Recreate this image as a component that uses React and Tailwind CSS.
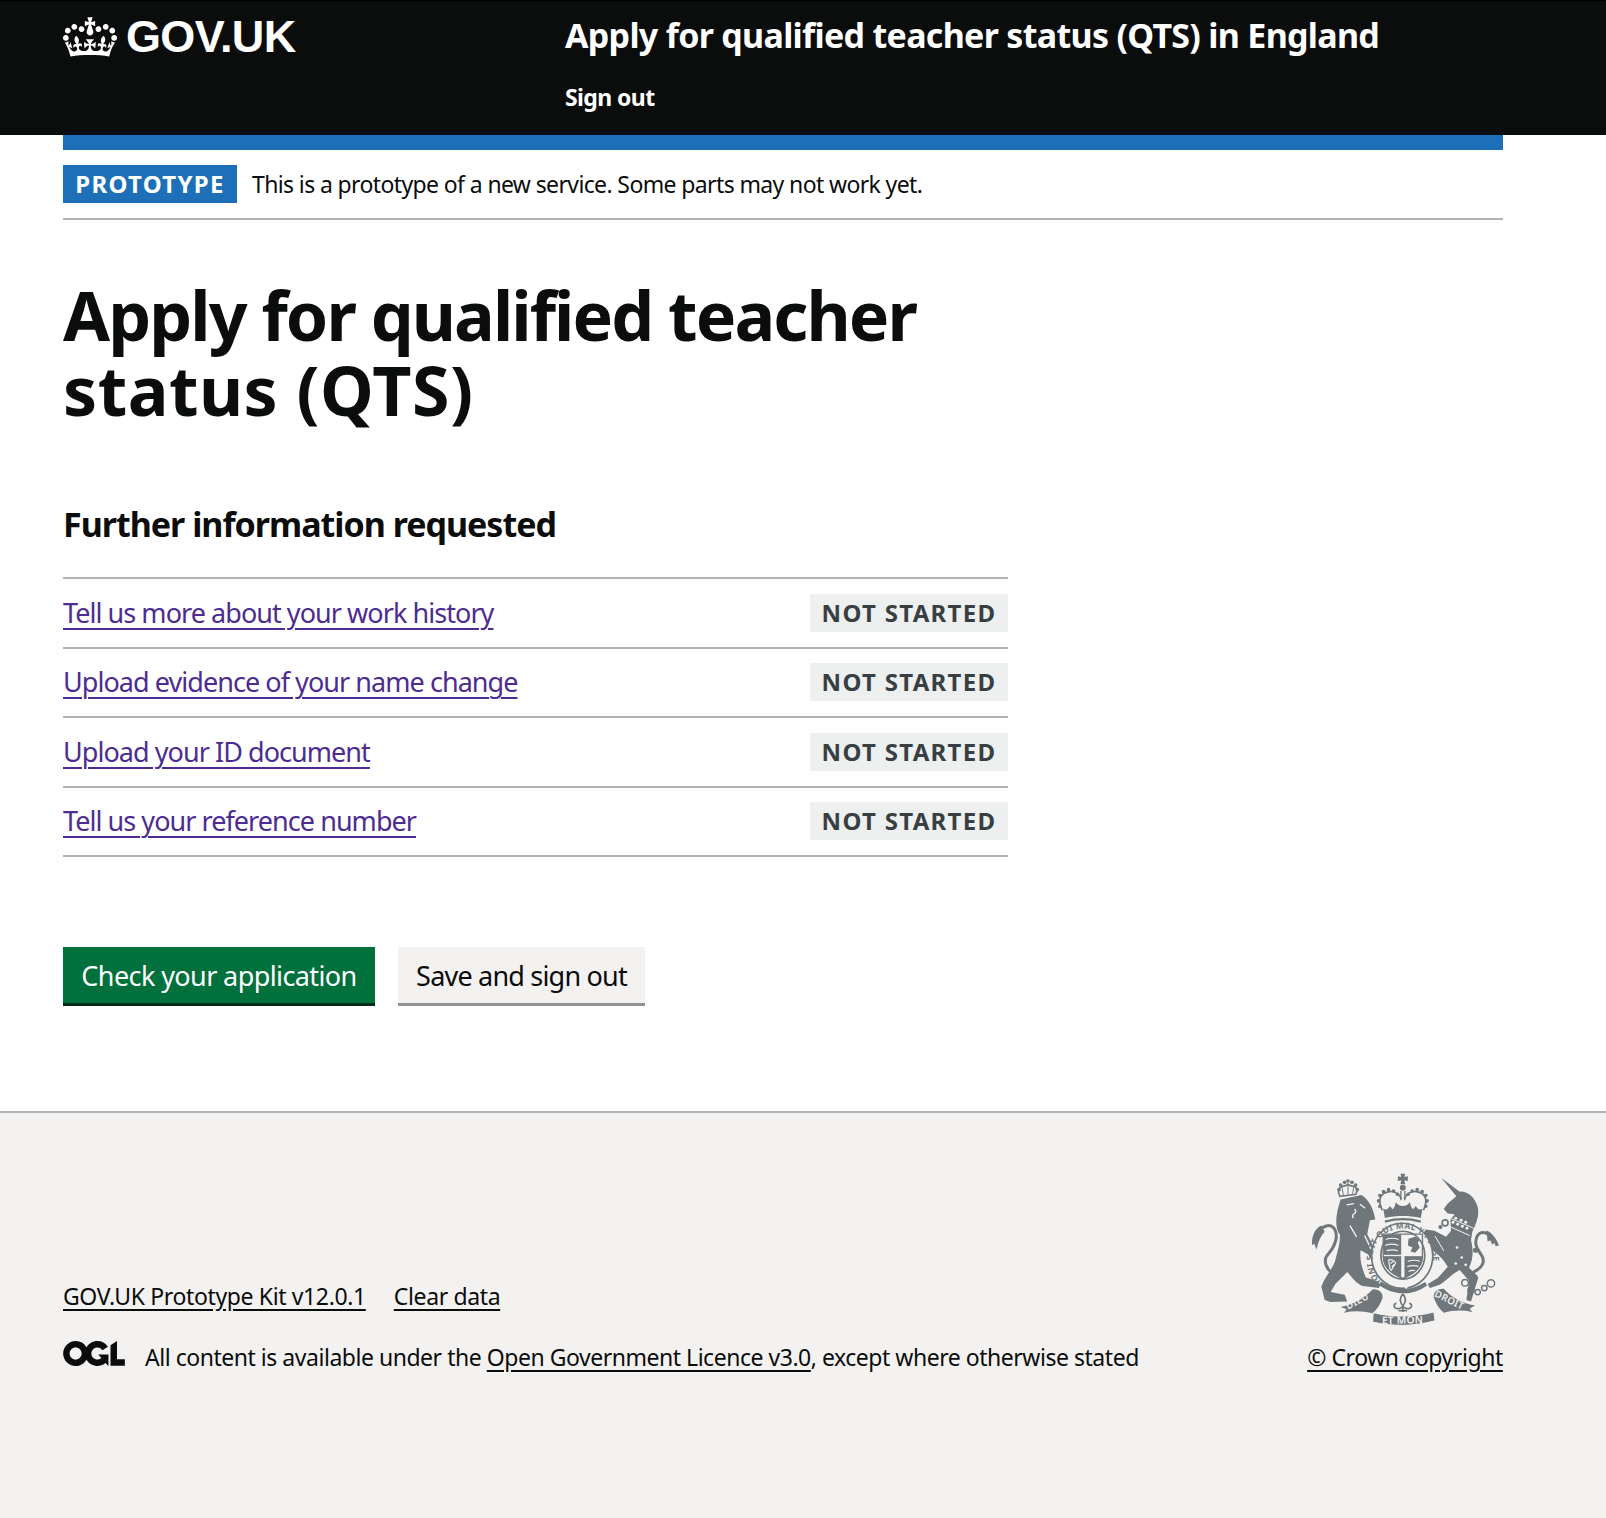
function Crown() {
  return (
    <svg viewBox="0 0 132 97" width="54" height="40" fill="#fff" className="block shrink-0">
      <path d="M25 30.2c3.5 1.5 7.7-.2 9.1-3.7 1.5-3.6-.2-7.8-3.9-9.2-3.6-1.4-7.6.3-9.1 3.9-1.4 3.5.3 7.5 3.9 9zM9 39.5c3.6 1.5 7.8-.2 9.2-3.7 1.5-3.6-.2-7.8-3.9-9.1-3.6-1.5-7.6.2-9.1 3.8-1.4 3.5.3 7.5 3.8 9zM4.4 57.2c3.5 1.5 7.7-.2 9.1-3.8 1.5-3.6-.2-7.7-3.9-9.1-3.5-1.5-7.6.3-9.1 3.8-1.4 3.5.3 7.6 3.9 9.1zm38.3-21.4c3.5 1.5 7.7-.2 9.1-3.8 1.5-3.6-.2-7.7-3.9-9.1-3.6-1.5-7.6.3-9.1 3.8-1.3 3.6.4 7.7 3.9 9.1zm64.4-5.6c-3.6 1.5-7.8-.2-9.1-3.7-1.5-3.6.2-7.8 3.8-9.2 3.6-1.4 7.7.3 9.2 3.9 1.3 3.5-.4 7.5-3.9 9zm15.9 9.3c-3.6 1.5-7.7-.2-9.1-3.7-1.5-3.6.2-7.8 3.7-9.1 3.6-1.5 7.7.2 9.2 3.8 1.5 3.5-.3 7.5-3.8 9zm4.7 17.7c-3.6 1.5-7.8-.2-9.2-3.8-1.5-3.6.2-7.7 3.9-9.1 3.6-1.5 7.7.3 9.2 3.8 1.3 3.5-.4 7.6-3.9 9.1zM89.3 35.8c-3.6 1.5-7.8-.2-9.2-3.8-1.4-3.6.2-7.7 3.9-9.1 3.6-1.5 7.7.3 9.2 3.8 1.4 3.6-.3 7.7-3.9 9.1zM69.7 17.7l8.9 4.7V9.3l-8.9 2.8c-.2-.3-.5-.6-.9-.9L72.4 0H59.6l3.5 11.2c-.3.3-.6.5-.9.9l-8.8-2.8v13.1l8.8-4.7c.3.3.6.7.9.9l-5 15.4v.1c-.2.8-.4 1.6-.4 2.4 0 4.1 3.1 7.5 7 8.1h.2c.3 0 .7.1 1 .1.4 0 .7 0 1-.1h.2c4-.6 7.1-4.1 7.1-8.1 0-.8-.1-1.7-.4-2.4V34l-5.1-15.4c.4-.2.7-.6 1-.9zM66 92.8c16.9 0 32.8 1.1 47.1 3.2 4-16.9 8.9-26.7 14-33.5l-9.6-3.4c1 4.9 1.1 7.2 0 10.2-1.5-1.4-3-4.3-4.2-8.7L108.6 76c2.8-2 5-3.2 7.5-3.3-4.4 9.4-10 11.9-13.6 11.2-4.3-.8-6.3-4.6-5.6-7.9 1-4.7 5.7-5.9 8-.5 4.3-8.7-3-11.4-7.6-8.8 7.1-7.2 7.9-13.5 2.1-21.1-8 6.1-8.1 12.3-4.5 20.8-4.7-5.4-12.1-2.5-9.5 6.2 3.4-5.2 7.9-2 7.2 3.1-.6 4.3-6.4 7.8-13.5 7.2-10.3-.9-10.9-8-11.2-13.8 2.5-.5 7.1 1.8 11 7.3L80.2 60c-4.1 4.4-8 5.3-12.3 5.4 1.4-4.4 8-11.6 8-11.6H55.5s6.4 7.2 7.9 11.6c-4.2-.1-8-1-12.3-5.4l1.4 16.4c3.9-5.5 8.5-7.7 10.9-7.3-.3 5.8-.9 12.8-11.1 13.8-7.2.6-12.9-2.9-13.5-7.2-.7-5 3.8-8.3 7.1-3.1 2.7-8.7-4.6-11.6-9.4-6.2 3.7-8.5 3.6-14.7-4.6-20.8-5.8 7.6-5 13.9 2.2 21.1-4.7-2.6-11.9.1-7.7 8.8 2.3-5.5 7.1-4.2 8.1.5.7 3.3-1.3 7.1-5.7 7.9-3.5.7-9-1.8-13.5-11.2 2.5.1 4.7 1.3 7.5 3.3l-4.7-15.4c-1.2 4.4-2.7 7.2-4.3 8.7-1.1-3-.9-5.3 0-10.2l-9.5 3.4c5 6.9 9.9 16.7 14 33.5 14.8-2.1 30.8-3.2 47.7-3.2z" />
    </svg>
  );
}

function Ogl() {
  return (
    <svg viewBox="0 0 483.2 195.7" width="62" height="25" fill="#0b0c0c" className="block shrink-0 mb-[6px]">
      <path d="M421.5 142.8V.1l-50.7 32.3v161.1h112.4v-50.7zm-122.3-9.6A47.12 47.12 0 0 1 221 97.8c0-26 21.1-47.1 47.1-47.1 16.7 0 31.4 8.7 39.7 21.8l42.7-27.2A97.63 97.63 0 0 0 268.1 0c-36.5 0-68.3 20.1-85.1 49.7A98 98 0 0 0 97.8 0C43.9 0 0 43.9 0 97.8s43.9 97.8 97.8 97.8c36.5 0 68.3-20.1 85.1-49.7a97.76 97.76 0 0 0 149.6 25.4l19.4 22.2h3v-87.8h-80l24.3 27.5zM97.8 145c-26 0-47.1-21.1-47.1-47.1s21.1-47.1 47.1-47.1 47.2 21 47.2 47S123.8 145 97.8 145" />
    </svg>
  );
}

function Crest() {
  const c = "#6f777b";
  const bg = "#f3f2f1";
  const font = "'Noto Sans', sans-serif";
  const arcDots = [[262,122],[266,106],[277,94],[292,88],[307,92],[319,102],[351,102],[363,92],[378,88],[393,94],[404,106],[408,122],[404,138],[266,138]];
  const lionCrown = [[143,88],[148,74],[160,66],[170,62],[182,66],[193,74],[198,88]];
  return (
    <svg viewBox="60 38 566 460" width="189" height="153" className="block mx-auto">
      {/* royal crown */}
      <path fill={c} d="M328 40h14l-2 10 10-2v14l-10-2 2 12h-14l2-12-10 2V48l10 2z" />
      <circle cx="335" cy="82" r="9" fill={c} />
      <path fill="none" stroke={c} strokeWidth="4" d="M329 92v28M341 92v28" />
      <path fill="none" stroke={c} strokeWidth="5" d="M273 150c-14-30-8-52 22-56 18-2 30 10 36 22M397 150c14-30 8-52-22-56-18-2-30 10-36 22" />
      {arcDots.map(([x, y]) => <circle key={x + "-" + y} cx={x} cy={y} r="5.5" fill={c} />)}
      <path fill={c} d="M276 145c8 6 14 2 20-8l8 10c6-4 8-14 10-22 4 8 12 12 21 12 9 0 17-4 21-12 2 8 4 18 10 22l8-10c6 10 12 14 20 8l-5 28c-36-8-72-8-108 0z" />
      <path fill="none" stroke={c} strokeWidth="7" d="M281 184c34-9 74-9 108 0" />

      {/* lion crown */}
      <path fill="none" stroke={c} strokeWidth="5" d="M146 108c-8-16-6-26 8-30 6-2 12 0 16-6 4 6 10 4 16 6 12 2 14 12 8 24z" />
      <path fill="none" stroke={c} strokeWidth="3" d="M156 104l-4-24M170 102V72M184 100l4-22" />
      {lionCrown.map(([x, y]) => <circle key={x} cx={x} cy={y} r="5.5" fill={c} />)}

      {/* lion */}
      <path fill={c} d="M148 118L210 104C235 118 248 150 252 178L236 180L228 222L262 290L246 306L230 282L208 270C204 300 214 330 224 352L262 364L264 384L214 378C196 372 180 350 168 336L132 372L118 396L160 404L168 424L118 426L100 420L90 380C100 350 122 330 132 300C140 270 146 250 146 224C128 200 134 160 148 118Z" />
      <path fill="none" stroke={bg} strokeWidth="4" d="M166 134l22-4M190 146c4 4 4 10 0 14-6 2-8 8-4 14M206 132l16 12M176 196l20 34M220 226l24 50" />
      {/* lion tail */}
      <path fill="none" stroke={c} strokeWidth="9" strokeLinecap="round" d="M132 345C104 330 92 300 112 280C130 260 144 226 128 204C116 190 92 196 84 215" />
      <path fill={c} d="M62 256C60 230 70 205 90 196L100 215C88 228 80 245 76 268L68 250Z" />

      {/* unicorn */}
      <path fill={c} d="M450 52L506 94C530 92 552 112 560 140C566 165 556 190 544 214L540 240C548 270 546 300 534 322C544 336 556 340 562 352L540 424L526 420L534 362L506 330C484 340 470 360 446 374L416 384L410 372L440 354L470 320C456 296 440 280 420 268L410 240L392 226L404 208L430 212L465 230L480 212L478 182C480 172 488 170 490 162L470 160L458 146L470 130L496 108Z" />
      <path fill="none" stroke={bg} strokeWidth="3" d="M482 176l66 28M478 200l58 26M432 228l26 44" />
      {[[486,186],[500,192],[514,198],[528,204],[494,174],[510,180],[524,186]].map(([x, y]) => <circle key={x + "-" + y} cx={x} cy={y} r="4.5" fill={bg} />)}
      <circle cx="462" cy="188" r="9" fill="none" stroke={c} strokeWidth="5" />
      <circle cx="448" cy="200" r="6" fill={c} />
      {[[498,262],[512,292],[494,310],[524,314]].map(([x, y]) => <circle key={x} cx={x} cy={y} r="4" fill={bg} />)}
      {/* chain */}
      {[[522,368,10],[540,390,9],[560,396,8],[580,384,8],[600,370,11]].map(([x, y, r]) => <circle key={x} cx={x} cy={y} r={r} fill="none" stroke={c} strokeWidth="4.5" />)}
      <circle cx="554" cy="270" r="8" fill={c} />
      {/* unicorn tail */}
      <path fill="none" stroke={c} strokeWidth="9" strokeLinecap="round" d="M548 335c24-10 38-30 22-52-10-16-22-30-12-54 10-18 30-14 40 0" />
      <path fill={c} d="M586 210c14 6 30 22 38 46l-10 2-4-10-6 6-6-14-8 4z" />

      {/* garter */}
      <ellipse cx="333" cy="287" rx="92" ry="98" fill={bg} stroke={c} strokeWidth="5" />
      <ellipse cx="335" cy="285" rx="66" ry="72" fill={bg} stroke={c} strokeWidth="5" />
      <defs>
        <path id="garterArc" d="M276 372C222 326 232 208 335 205C432 206 446 322 404 368" />
        <clipPath id="shieldClip">
          <path d="M276 222H394V290C394 325 360 345 335 355C310 345 276 325 276 290Z" />
        </clipPath>
      </defs>
      <text fill={c} fontFamily={font} fontWeight="700" fontSize="25" letterSpacing="1">
        <textPath href="#garterArc" startOffset="0">HONI SOIT QUI MAL Y PENSE</textPath>
      </text>
      <path fill={c} d="M270 364c40 30 90 30 132 2l6 10c-44 32-100 32-146-2z" />
      <circle cx="345" cy="382" r="4" fill={bg} />
      {/* shield */}
      <g clipPath="url(#shieldClip)">
        <rect x="276" y="222" width="54" height="62" fill={c} />
        <rect x="340" y="288" width="54" height="70" fill={c} />
        <rect x="276" y="288" width="54" height="70" fill={c} />
        <path fill={c} d="M352 236l20-6 14 8-6 10 6 14-14 16-14-4 6-12-14-6z" />
        <path fill="none" stroke={bg} strokeWidth="3.5" d="M284 238c10-5 28-5 38 0M282 256c12-5 28-5 40 0M286 272c10-4 26-4 34 0M350 304c10-5 28-5 36 0M348 320c10-5 28-5 34 0M352 334c8-4 18-4 24 0" />
        <path fill="none" stroke={bg} strokeWidth="3.5" d="M292 300l6 34 16-26M292 300c6-4 16 0 22 8M298 310l8-6M302 320l8-8" />
      </g>
      <path fill="none" stroke={c} strokeWidth="4" d="M276 222H394V290C394 325 360 345 335 355C310 345 276 325 276 290Z" />

      {/* motto */}
      <path fill={c} d="M148 441C190 432 220 412 244 388C262 386 276 398 274 414C268 432 258 448 244 460C214 452 186 452 158 458L166 448Z" />
      <path fill={c} d="M552 436C510 430 480 410 458 386C440 384 426 396 428 412C434 430 444 446 458 458C488 450 516 450 544 456L536 446Z" />
      <path fill={c} stroke={bg} strokeWidth="3" d="M246 458C304 472 368 472 428 456L432 482C368 500 304 500 244 486Z" />
      <text fill={bg} fontFamily={font} fontWeight="600" fontSize="31" letterSpacing="0.5" x="272" y="491" transform="rotate(-1 335 480)">ET MON</text>
      <text fill={bg} fontFamily={font} fontWeight="600" fontSize="29" letterSpacing="1" transform="translate(170 449) rotate(-28)">DIEU</text>
      <text fill={bg} fontFamily={font} fontWeight="600" fontSize="29" letterSpacing="1" transform="translate(428 408) rotate(26)">DROIT</text>
      {/* fleur */}
      <path fill="none" stroke={c} strokeWidth="5" d="M335 402c-10 10-10 22 0 36 10-14 10-26 0-36zM316 430c-10 0-10 14 2 16 8 0 12-4 17-6 5 2 9 6 17 6 12-2 12-16 2-16M322 452h26M335 442v14" />
    </svg>
  );
}

const tasks = [
  "Tell us more about your work history",
  "Upload evidence of your name change",
  "Upload your ID document",
  "Tell us your reference number",
];

export default function App() {
  return (
    <div className="bg-white text-[#0b0c0c] font-['Noto_Sans',sans-serif]">
      <header className="h-[135px] bg-[#0b0c0c] text-white border-t border-black">
        <div className="flex ml-[63px] w-[1440px]">
          <div className="w-[502px] flex items-center gap-[9px] h-[71px]">
            <Crown />
            <span className="font-['Liberation_Sans',sans-serif] font-bold text-[45px] leading-[71px] tracking-[-0.65px]">GOV.UK</span>
          </div>
          <div className="pt-[12px]">
            <div className="font-bold text-[34px] leading-[44px] tracking-[-0.7px]">Apply for qualified teacher status (QTS) in England</div>
            <div className="mt-[22px] font-bold text-[23px] leading-[36px] tracking-[-0.6px]">Sign out</div>
          </div>
        </div>
      </header>

      <main className="ml-[63px] w-[1440px]">
        <div className="h-[15px] bg-[#1d70b8]" />
        <div className="flex items-center gap-[15px] pt-[15px] pb-[15px] border-b-2 border-[#b1b4b6] h-[70px]">
          <span className="bg-[#1d70b8] text-white font-bold text-[24px] leading-[38px] h-[38px] w-[174px] text-center tracking-[1.3px]">PROTOTYPE</span>
          <span className="text-[23px] leading-[30px] tracking-[-0.62px]">This is a prototype of a new service. Some parts may not work yet.</span>
        </div>

        <h1 className="mt-[57px] font-bold text-[68px] leading-[75px] w-[945px]">
          <span className="block tracking-[-1.9px]">Apply for qualified teacher</span>
          <span className="block tracking-[0.5px]">status (QTS)</span>
        </h1>

        <h2 className="mt-[75px] font-bold text-[34px] leading-[45px] tracking-[-1px]">Further information requested</h2>

        <ul className="mt-[30px] w-[945px] border-t-2 border-[#b1b4b6]">
          {tasks.map((t) => (
            <li key={t} className="flex items-center justify-between h-[69.5px] border-b-2 border-[#b1b4b6]">
              <a className="text-[27px] leading-[38px] text-[#4c2c92] underline underline-offset-[5px] decoration-[1.5px] tracking-[-0.95px]">{t}</a>
              <span className="bg-[#eeefef] text-[#383f43] font-bold text-[24px] leading-[37px] h-[38px] w-[198px] text-center tracking-[1.3px]">NOT STARTED</span>
            </li>
          ))}
        </ul>

        <div className="flex gap-[23px] mt-[90px]">
          <button className="h-[59px] w-[312px] bg-[#00703c] text-white text-[27px] leading-[50px] border-b-[3px] border-[#002d18] pt-[2px] tracking-[-0.6px]">Check your application</button>
          <button className="h-[59px] w-[247px] bg-[#f3f2f1] text-[#0b0c0c] text-[27px] leading-[50px] border-b-[3px] border-[#929191] pt-[2px] tracking-[-0.8px]">Save and sign out</button>
        </div>
      </main>

      <footer className="mt-[105px] h-[407px] bg-[#f3f2f1] border-t-2 border-[#b1b4b6]">
        <div className="ml-[63px] w-[1440px] flex justify-between items-end pt-[60px]">
          <div className="text-[23px] leading-[30px] tracking-[-0.47px]">
            <div className="flex gap-[28px] mb-[30px] tracking-[-0.37px]">
              <a className="underline underline-offset-[4px]">GOV.UK Prototype Kit v12.0.1</a>
              <a className="underline underline-offset-[4px]">Clear data</a>
            </div>
            <div className="flex items-center gap-[20px]">
              <Ogl />
              <span>All content is available under the <a className="underline underline-offset-[4px]">Open Government Licence v3.0</a>, except where otherwise stated</span>
            </div>
          </div>
          <div className="w-[196px] text-center">
            <Crest />
            <a className="block mt-[16px] text-[23px] leading-[30px] tracking-[-0.42px] underline underline-offset-[4px] whitespace-nowrap">© Crown copyright</a>
          </div>
        </div>
      </footer>
    </div>
  );
}
